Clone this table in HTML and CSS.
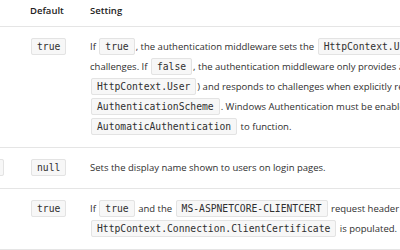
FILE: index.html
```html
<!DOCTYPE html>
<html lang="en">
<head>
    <meta charset="UTF-8">
    <meta name="viewport" content="width=device-width, initial-scale=1.0">
    <title>IIS options</title>
    <link rel="stylesheet" href="styles.css">
</head>
<body>
    <table class="options-table">
        <colgroup>
            <col class="col-option">
            <col class="col-default">
            <col class="col-setting">
        </colgroup>
        <thead>
            <tr>
                <th>Option</th>
                <th>Default</th>
                <th>Setting</th>
            </tr>
        </thead>
        <tbody>
            <tr>
                <td><code>AutomaticAuthentication</code></td>
                <td><code>true</code></td>
                <td>If <code>true</code>, the authentication middleware sets the <code>HttpContext.User</code> and responds to challenges. If <code>false</code>, the authentication middleware only provides an identity (<wbr><code>HttpContext.User</code>) and responds to challenges when explicitly requested by the <code>AuthenticationScheme</code>. Windows Authentication must be enabled in IIS for <code>AutomaticAuthentication</code> to function.</td>
            </tr>
            <tr>
                <td><code>AuthenticationDisplayName</code></td>
                <td><code>null</code></td>
                <td>Sets the display name shown to users on login pages.</td>
            </tr>
            <tr>
                <td><code>ForwardClientCertificate</code></td>
                <td><code>true</code></td>
                <td>If <code>true</code> and the <code>MS-ASPNETCORE-CLIENTCERT</code> request header is present, the <code>HttpContext.Connection.ClientCertificate</code> is populated.</td>
            </tr>
        </tbody>
    </table>
</body>
</html>
```

FILE: styles.css
```css
* {
    margin: 0;
    padding: 0;
    box-sizing: border-box;
}

body {
    font-family: 'Open Sans', 'Noto Sans', sans-serif;
    font-size: 9.5px;
    color: #2f2f2f;
    background: white;
    overflow: hidden;
}

.options-table {
    border-collapse: collapse;
    table-layout: fixed;
    width: 709px;
    margin-left: -167px;
}

.col-option {
    width: 185px;
}

.col-default {
    width: 60px;
}

.col-setting {
    width: 464px;
}

.options-table th,
.options-table td {
    text-align: left;
    vertical-align: top;
    line-height: 20px;
    padding: 10px 12px 10px;
    border-bottom: 1px solid #e5e5e5;
}

.options-table th {
    font-weight: 600;
    color: #222;
    padding-top: 1px;
    padding-bottom: 5px;
}

code {
    font-family: 'DejaVu Sans Mono', 'Liberation Mono', monospace;
    font-size: 9.7px;
    color: #2f2f2f;
    background: #f7f7f7;
    border: 1px solid #e3e3e3;
    border-radius: 2px;
    padding: 2px 5px;
    margin: 0 1px;
}
```
